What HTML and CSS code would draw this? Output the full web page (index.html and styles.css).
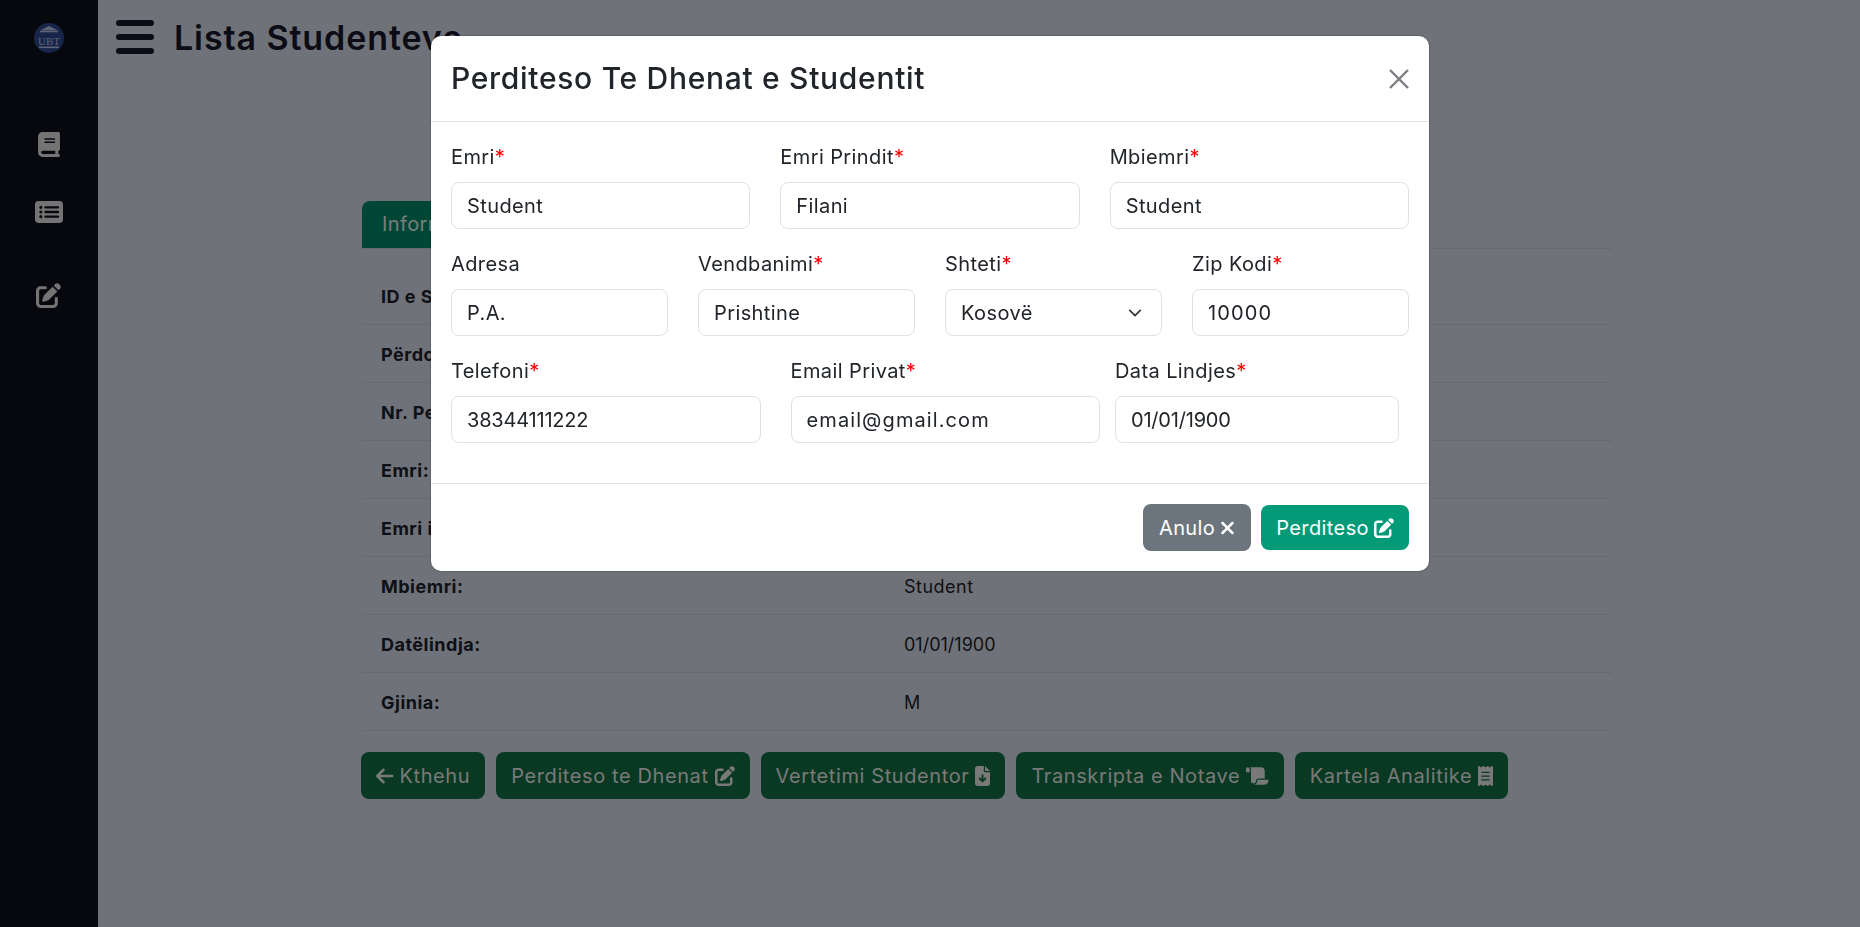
FILE: index.html
```html
<!DOCTYPE html>
<html lang="en">
<head>
    <meta charset="UTF-8">
    <meta name="viewport" content="width=device-width, initial-scale=1.0">
    <title>Lista Studenteve</title>
    <link rel="stylesheet" href="styles.css">
</head>
<body>

<svg class="icon-defs" xmlns="http://www.w3.org/2000/svg">
    <symbol id="i-edit" viewBox="0 0 512 512"><path d="M471.6 21.7c-21.9-21.9-57.3-21.9-79.2 0L362.3 51.7l97.9 97.9 30.1-30.1c21.9-21.9 21.9-57.3 0-79.2L471.6 21.7zm-299.2 220c-6.1 6.1-10.8 13.6-13.5 21.9l-29.6 88.8c-2.9 8.6-.6 18.1 5.8 24.6s15.9 8.7 24.6 5.8l88.8-29.6c8.2-2.7 15.7-7.4 21.9-13.5L437.7 172.3 339.7 74.3 172.4 241.7zM96 64C43 64 0 107 0 160V416c0 53 43 96 96 96H352c53 0 96-43 96-96V320c0-17.7-14.3-32-32-32s-32 14.3-32 32v96c0 17.7-14.3 32-32 32H96c-17.7 0-32-14.3-32-32V160c0-17.7 14.3-32 32-32h96c17.7 0 32-14.3 32-32s-14.3-32-32-32H96z"/></symbol>
</svg>

<div class="page">
    <!-- Sidebar -->
    <aside class="sidebar">
        <svg class="logo" viewBox="0 0 30 30">
            <circle cx="15" cy="15" r="15" fill="#2a4488"/>
            <path d="M15 3 L24 7.5 H6 Z" fill="#a9b6d6"/>
            <rect x="6" y="8" width="18" height="1.3" fill="#a9b6d6"/>
            <rect x="5" y="23.5" width="20" height="1.6" fill="#a9b6d6"/>
            <text x="15" y="22" text-anchor="middle" class="logo-text">UBT</text>
        </svg>
        <a class="side-link side-book" href="#">
            <svg viewBox="0 0 448 512"><path d="M96 0C43 0 0 43 0 96V416c0 53 43 96 96 96H384h32c17.7 0 32-14.3 32-32s-14.3-32-32-32V384c17.7 0 32-14.3 32-32V32c0-17.7-14.3-32-32-32H384 96zm0 384H352v64H96c-17.7 0-32-14.3-32-32s14.3-32 32-32zm32-240c0-8.8 7.2-16 16-16H336c8.8 0 16 7.2 16 16s-7.2 16-16 16H144c-8.8 0-16-7.2-16-16zm16 48H336c8.8 0 16 7.2 16 16s-7.2 16-16 16H144c-8.8 0-16-7.2-16-16s7.2-16 16-16z"/></svg>
        </a>
        <a class="side-link side-list" href="#">
            <svg viewBox="0 0 576 448"><path fill-rule="evenodd" d="M64 0C28.7 0 0 28.7 0 64V384c0 35.3 28.7 64 64 64H512c35.3 0 64-28.7 64-64V64c0-35.3-28.7-64-64-64H64zM88 128a32 32 0 1 1 64 0 32 32 0 1 1 -64 0zM88 224a32 32 0 1 1 64 0 32 32 0 1 1 -64 0zM88 320a32 32 0 1 1 64 0 32 32 0 1 1 -64 0zM216 104H472c13 0 24 11 24 24s-11 24-24 24H216c-13 0-24-11-24-24s11-24 24-24zM216 200H472c13 0 24 11 24 24s-11 24-24 24H216c-13 0-24-11-24-24s11-24 24-24zM216 296H472c13 0 24 11 24 24s-11 24-24 24H216c-13 0-24-11-24-24s11-24 24-24z"/></svg>
        </a>
        <a class="side-link side-edit" href="#">
            <svg><use href="#i-edit"/></svg>
        </a>
    </aside>

    <!-- Main content behind the modal -->
    <main class="main">
        <header class="topbar">
            <svg class="burger" viewBox="0 0 38 34">
                <rect x="0" y="0" width="38" height="6" rx="3"/>
                <rect x="0" y="14" width="38" height="6" rx="3"/>
                <rect x="0" y="28" width="38" height="6" rx="3"/>
            </svg>
            <h1>Lista Studenteve</h1>
        </header>

        <section class="content">
            <div class="tabs">
                <a class="tab" href="#">Informacione</a>
            </div>
            <div class="rows">
                <div class="row"><b>ID e Studentit:</b><span>123456</span></div>
                <div class="row"><b>Përdoruesi:</b><span>student.filani</span></div>
                <div class="row"><b>Nr. Personal:</b><span>1234567890</span></div>
                <div class="row"><b>Emri:</b><span>Student</span></div>
                <div class="row"><b>Emri i Prindit:</b><span>Filani</span></div>
                <div class="row"><b>Mbiemri:</b><span>Student</span></div>
                <div class="row"><b>Datëlindja:</b><span class="val-date">01/01/1900</span></div>
                <div class="row"><b>Gjinia:</b><span>M</span></div>
            </div>
            <div class="actions">
                <a class="btn-dark" href="#">
                    <svg class="ic ic-arrow" viewBox="0 0 448 512"><path d="M9.4 233.4c-12.5 12.5-12.5 32.8 0 45.3l160 160c12.5 12.5 32.8 12.5 45.3 0s12.5-32.8 0-45.3L109.2 288 416 288c17.7 0 32-14.3 32-32s-14.3-32-32-32l-306.7 0L214.6 118.6c12.5-12.5 12.5-32.8 0-45.3s-32.8-12.5-45.3 0l-160 160z"/></svg>
                    Kthehu
                </a>
                <a class="btn-dark" href="#">
                    Perditeso te Dhenat
                    <svg class="ic ic-edit"><use href="#i-edit"/></svg>
                </a>
                <a class="btn-dark" href="#">
                    Vertetimi Studentor
                    <svg class="ic ic-file" viewBox="0 0 384 512"><path d="M64 0C28.7 0 0 28.7 0 64V448c0 35.3 28.7 64 64 64H320c35.3 0 64-28.7 64-64V160H256c-17.7 0-32-14.3-32-32V0H64zM256 0V128H384L256 0zM216 232V334.1l31-31c9.4-9.4 24.6-9.4 33.9 0s9.4 24.6 0 33.9l-72 72c-9.4 9.4-24.6 9.4-33.9 0l-72-72c-9.4-9.4-9.4-24.6 0-33.9s24.6-9.4 33.9 0l31 31V232c0-13.3 10.7-24 24-24s24 10.7 24 24z"/></svg>
                </a>
                <a class="btn-dark" href="#">
                    Transkripta e Notave
                    <svg class="ic ic-scroll" viewBox="0 0 576 512"><path d="M0 80v48c0 17.7 14.3 32 32 32H48 96V80c0-26.5-21.5-48-48-48S0 53.5 0 80zM112 32c10 13.4 16 30 16 48V384c0 35.3 28.7 64 64 64s64-28.7 64-64v-5.3c0-32.4 26.3-58.7 58.7-58.7H480V128c0-53-43-96-96-96H112zM464 480c61.9 0 112-50.1 112-112c0-8.8-7.2-16-16-16H314.7c-14.7 0-26.7 11.9-26.7 26.7V384c0 53-43 96-96 96H368h96z"/></svg>
                </a>
                <a class="btn-dark" href="#">
                    Kartela Analitike
                    <svg class="ic ic-file" viewBox="0 0 384 512"><path d="M14 2.2C22.5-1.7 32.5-.3 39.6 5.8L80 40.4 120.4 5.8c9-7.7 22.3-7.7 31.2 0L192 40.4 232.4 5.8c9-7.7 22.3-7.7 31.2 0L304 40.4 344.4 5.8c7.1-6.1 17.1-7.5 25.6-3.6s14 12.4 14 21.8V488c0 9.4-5.5 17.9-14 21.8s-18.5 2.5-25.6-3.6L304 471.6l-40.4 34.6c-9 7.7-22.3 7.7-31.2 0L192 471.6l-40.4 34.6c-9 7.7-22.3 7.7-31.2 0L80 471.6 39.6 506.2c-7.1 6.1-17.1 7.5-25.6 3.6S0 497.4 0 488V24C0 14.6 5.5 6.1 14 2.2zM96 144c-8.8 0-16 7.2-16 16s7.2 16 16 16H288c8.8 0 16-7.2 16-16s-7.2-16-16-16H96zM80 352c0 8.8 7.2 16 16 16H288c8.8 0 16-7.2 16-16s-7.2-16-16-16H96c-8.8 0-16 7.2-16 16zM96 240c-8.8 0-16 7.2-16 16s7.2 16 16 16H288c8.8 0 16-7.2 16-16s-7.2-16-16-16H96z"/></svg>
                </a>
            </div>
        </section>
    </main>
</div>

<div class="backdrop"></div>

<!-- Modal: Perditeso -->
<div class="modal-wrap">
    <form class="modal" onsubmit="return false;">
        <div class="modal-head">
            <h2>Perditeso Te Dhenat e Studentit</h2>
            <svg class="close" viewBox="0 0 20 20"><path d="M1 1 L19 19 M19 1 L1 19"/></svg>
        </div>
        <div class="modal-body">
            <div class="form-row">
                <div class="field"><label>Emri<i>*</i></label><input type="text" value="Student"></div>
                <div class="field"><label>Emri Prindit<i>*</i></label><input type="text" value="Filani"></div>
                <div class="field"><label>Mbiemri<i>*</i></label><input type="text" value="Student"></div>
            </div>
            <div class="form-row">
                <div class="field"><label>Adresa</label><input type="text" value="P.A."></div>
                <div class="field"><label>Vendbanimi<i>*</i></label><input type="text" value="Prishtine"></div>
                <div class="field"><label>Shteti<i>*</i></label>
                    <select><option>Kosovë</option><option>Shqipëri</option></select>
                </div>
                <div class="field"><label>Zip Kodi<i>*</i></label><input class="input-wide" type="text" value="10000"></div>
            </div>
            <div class="form-row form-row-last">
                <div class="field"><label>Telefoni<i>*</i></label><input class="input-tight" type="text" value="38344111222"></div>
                <div class="field"><label>Email Privat<i>*</i></label><input class="input-wide" type="text" value="email@gmail.com"></div>
                <div class="field field-date"><label>Data Lindjes<i>*</i></label><input class="input-tight" type="text" value="01/01/1900"></div>
            </div>
        </div>
        <div class="modal-foot">
            <button class="btn-cancel" type="button">
                Anulo
                <svg class="ic ic-file" viewBox="0 0 384 512"><path d="M342.6 150.6c12.5-12.5 12.5-32.8 0-45.3s-32.8-12.5-45.3 0L192 210.7 86.6 105.4c-12.5-12.5-32.8-12.5-45.3 0s-12.5 32.8 0 45.3L146.7 256 41.4 361.4c-12.5 12.5-12.5 32.8 0 45.3s32.8 12.5 45.3 0L192 301.3 297.4 406.6c12.5 12.5 32.8 12.5 45.3 0s12.5-32.8 0-45.3L237.3 256 342.6 150.6z"/></svg>
            </button>
            <button class="btn-save" type="submit">
                Perditeso
                <svg class="ic ic-edit"><use href="#i-edit"/></svg>
            </button>
        </div>
    </form>
</div>

</body>
</html>
```

FILE: styles.css
```css
* {
    box-sizing: border-box;
}

html, body {
    height: 100%;
}

body {
    margin: 0;
    background-color: #cbd0db;
    font-family: Inter, sans-serif;
    font-size: 20px;
    letter-spacing: 0.4px;
    color: #212529;
    overflow: hidden;
}

a {
    text-decoration: none;
}

.icon-defs {
    display: none;
}

.page {
    display: flex;
    min-height: 100%;
}

/* Sidebar */
.sidebar {
    flex: 0 0 98px;
    height: 927px;
    background-color: #0e0e1a;
    display: flex;
    flex-direction: column;
    align-items: center;
}

.logo {
    width: 30px;
    height: 30px;
    margin-top: 23px;
}

.logo-text {
    font-family: "Liberation Serif", serif;
    font-size: 11px;
    letter-spacing: 0;
    fill: #a9b6d6;
}

.side-link {
    display: block;
    fill: #d4d4d4;
}

.side-link svg {
    display: block;
    width: 100%;
    height: 100%;
}

.side-book {
    width: 22px;
    height: 25px;
    margin-top: 79px;
}

.side-list {
    width: 28px;
    height: 22px;
    margin-top: 44px;
}

.side-edit {
    width: 25px;
    height: 25px;
    margin-top: 60px;
    margin-right: 1px;
}

/* Main */
.main {
    flex: 1;
    min-width: 0;
}

.topbar {
    display: flex;
    align-items: center;
    height: 74px;
    padding-left: 18px;
    gap: 20px;
}

.burger {
    width: 38px;
    height: 34px;
    fill: #161628;
}

.topbar h1 {
    margin: 0;
    font-size: 34px;
    font-weight: 600;
    letter-spacing: 0.9px;
    color: #161628;
}

.content {
    margin: 127px 248px 0 264px;
}

.tabs {
    height: 48px;
    border-bottom: 1px solid #bdc1cd;
}

.tab {
    display: inline-block;
    height: 47px;
    line-height: 47px;
    padding: 0 20px;
    background-color: #008060;
    color: #dfe5e2;
    border-radius: 8px 8px 0 0;
}

.rows {
    padding-top: 18px;
}

.row {
    display: flex;
    align-items: center;
    height: 58px;
    border-bottom: 1px solid #bdc1cd;
    padding-left: 19px;
    padding-top: 2px;
    font-size: 18px;
    letter-spacing: 0.5px;
    color: #1a1d2a;
}

.row b {
    width: 523px;
    font-weight: 700;
}

.val-date {
    letter-spacing: 0;
}

.actions {
    display: flex;
    gap: 11px;
    margin: 21px 0 0 -1px;
}

.btn-dark {
    display: flex;
    align-items: center;
    gap: 6px;
    height: 47px;
    padding: 0 15px;
    background-color: #12683f;
    color: #dcdcdc;
    border-radius: 8px;
    fill: #dcdcdc;
    letter-spacing: 0.6px;
}

.ic {
    height: 20px;
    flex: none;
}

.ic-arrow {
    width: 17.5px;
}

.ic-edit {
    width: 20px;
}

.ic-file {
    width: 15px;
}

.ic-scroll {
    width: 22.5px;
}

/* Modal */
.backdrop {
    position: fixed;
    inset: 0;
    background-color: rgba(0, 0, 0, 0.45);
}

.modal-wrap {
    position: fixed;
    inset: 0;
    display: flex;
    justify-content: center;
    align-items: flex-start;
    padding-top: 36px;
}

.modal {
    width: 998px;
    height: 535px;
    background-color: #fff;
    border-radius: 10px;
    box-shadow: 0 0 2px rgba(0, 0, 0, 0.5);
    display: flex;
    flex-direction: column;
}

.modal-head {
    display: flex;
    align-items: center;
    justify-content: space-between;
    height: 86px;
    padding: 0 20px;
    border-bottom: 1px solid #dee2e6;
}

.modal-head h2 {
    margin: 0 0 2px;
    font-size: 30px;
    font-weight: 500;
    letter-spacing: 0.7px;
}

.close {
    width: 20px;
    height: 20px;
    fill: none;
    stroke: #7a7c80;
    stroke-width: 2.4;
}

.modal-body {
    flex: 1;
    padding: 21px 20px 0;
}

.form-row {
    display: flex;
    gap: 30px;
    margin-bottom: 21px;
}

.field {
    flex: 1 1 0;
    min-width: 0;
}

.form-row-last .field-date {
    flex: 0 0 284px;
    margin-left: -15px;
}

.form-row-last {
    padding-right: 10px;
}

label {
    display: block;
    height: 27px;
    line-height: 29px;
    margin-bottom: 12px;
}

label i {
    color: #f00;
    font-style: normal;
}

input, select {
    display: block;
    width: 100%;
    height: 47px;
    padding: 0 15px;
    border: 1px solid #dee2e6;
    border-radius: 8px;
    background-color: #fff;
    font-family: inherit;
    font-size: 20px;
    letter-spacing: 0.4px;
    color: #212529;
}

.input-wide {
    letter-spacing: 1.1px;
}

.input-tight {
    letter-spacing: -0.2px;
}

select {
    appearance: none;
    background-image: url("data:image/svg+xml,%3csvg xmlns='http://www.w3.org/2000/svg' viewBox='0 0 16 16'%3e%3cpath fill='none' stroke='%23343a40' stroke-linecap='round' stroke-linejoin='round' stroke-width='2' d='m2 5 6 6 6-6'/%3e%3c/svg%3e");
    background-repeat: no-repeat;
    background-position: right 17px center;
    background-size: 18px 14px;
}

.modal-foot {
    display: flex;
    justify-content: flex-end;
    align-items: center;
    gap: 10px;
    height: 88px;
    padding: 0 20px;
    border-top: 1px solid #dee2e6;
}

.modal-foot button {
    display: flex;
    align-items: center;
    gap: 5px;
    border: none;
    border-radius: 8px;
    padding: 0 15px;
    font-family: inherit;
    font-size: 20px;
    letter-spacing: 0.4px;
    color: #fff;
    fill: #fff;
}

.modal-foot .btn-cancel {
    height: 47px;
    padding: 0 16px;
    background-color: #6c757d;
}

.btn-save {
    height: 45px;
    background-color: #039b77;
}
```
